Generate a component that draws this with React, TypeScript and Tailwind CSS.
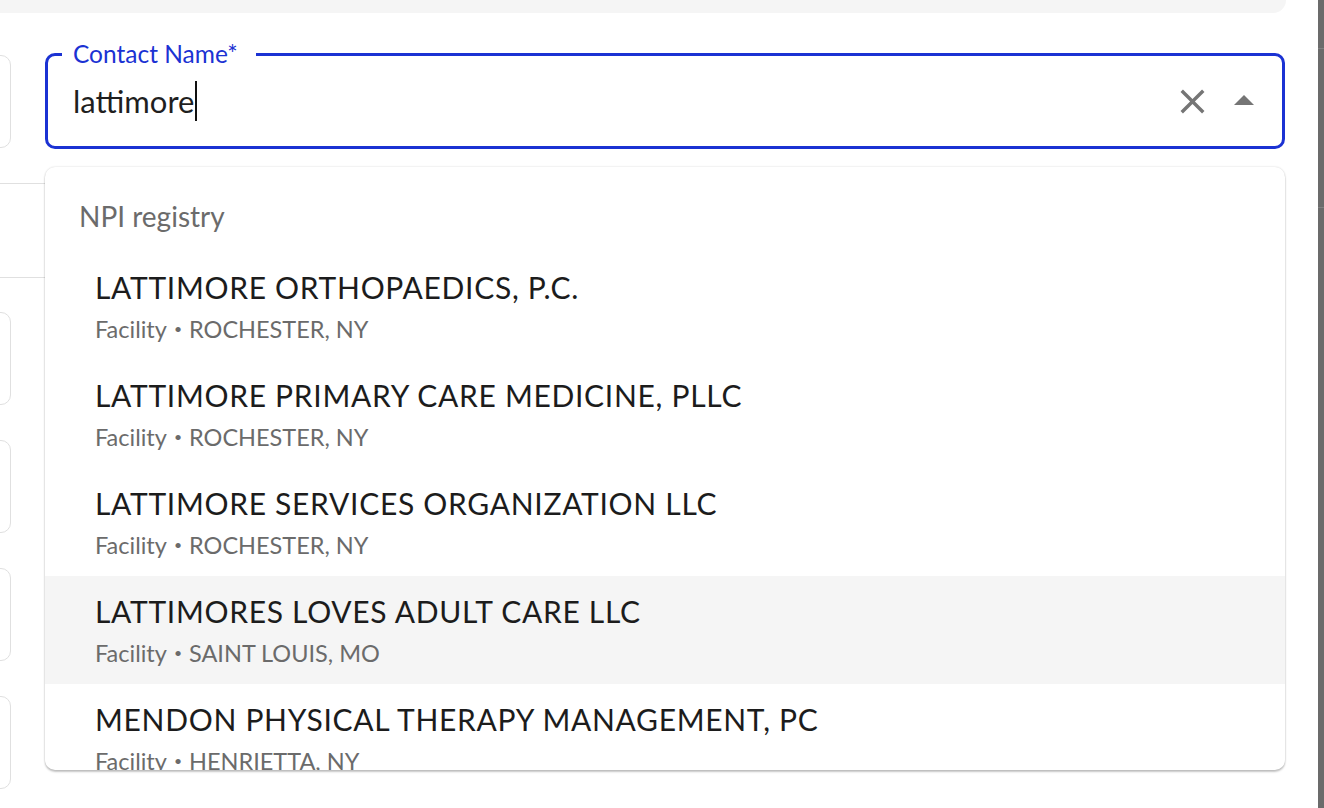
const results = [
  { name: 'LATTIMORE ORTHOPAEDICS, P.C.', place: 'ROCHESTER, NY' },
  { name: 'LATTIMORE PRIMARY CARE MEDICINE, PLLC', place: 'ROCHESTER, NY' },
  { name: 'LATTIMORE SERVICES ORGANIZATION LLC', place: 'ROCHESTER, NY' },
  { name: 'LATTIMORES LOVES ADULT CARE LLC', place: 'SAINT LOUIS, MO', active: true },
  { name: 'MENDON PHYSICAL THERAPY MANAGEMENT, PC', place: 'HENRIETTA, NY' },
]

function SideBox({ top }: { top: string }) {
  return <div className={`${top} -ml-[20px] h-[93px] w-[31px] rounded-[10px] border border-[#e0e0e0]`} />
}

export default function App() {
  return (
    <div className="flex h-[808px] w-[1324px] overflow-hidden bg-white [font-family:Lato,sans-serif]">
      <div className="flex flex-1 flex-col">
        <div className="h-[13px] w-[1286px] rounded-br-[14px] bg-[#f5f5f5]" />
        <div className="flex">
          <div className="flex w-[45px] flex-none flex-col">
            <SideBox top="mt-[42px]" />
            <div className="mt-[35px] h-[95px] border-y border-[#e0e0e0]" />
            <SideBox top="mt-[34px]" />
            <SideBox top="mt-[35px]" />
            <SideBox top="mt-[35px]" />
            <SideBox top="mt-[35px]" />
          </div>

          <div className="w-[1240px] flex-none">
            <div className="relative mt-[40px] flex h-[96px] items-center rounded-[10px] border-[3px] border-[#1b32d3] pl-[25px] pr-[14px]">
              <span className="absolute -top-[16px] left-[14px] bg-white pl-[11px] pr-[18px] text-[24.5px] leading-[28px] text-[#1b32d3]">
                Contact Name*
              </span>
              <div className="flex flex-1 items-center text-[31px] text-[#1f1f1f]">
                lattimore
                <span className="ml-[1px] h-[40px] w-[2px] bg-[#111]" />
              </div>
              <svg viewBox="0 0 24 24" className="h-[41px] w-[41px] fill-[#757575]">
                <path d="M19 6.41 17.59 5 12 10.59 6.41 5 5 6.41 10.59 12 5 17.59 6.41 19 12 13.41 17.59 19 19 17.59 13.41 12z" />
              </svg>
              <svg viewBox="0 0 24 24" className="ml-[7px] h-[48px] w-[48px] fill-[#757575]">
                <path d="M7 14l5-5 5 5z" />
              </svg>
            </div>

            <div className="mt-[18px] h-[603px] overflow-hidden rounded-[10px] bg-white shadow-[0_2px_2px_rgba(0,0,0,0.22),0_0_2px_rgba(0,0,0,0.18)]">
              <div className="flex h-[85px] items-end pb-[18px] pl-[34px] text-[28px] leading-[36px] text-[#6b6b6b]">
                NPI registry
              </div>
              {results.map((r) => (
                <div
                  key={r.name}
                  className={`flex h-[108px] flex-col pl-[50px] pt-[16px] ${r.active ? 'bg-[#f5f5f5]' : ''}`}
                >
                  <div className="text-[30px] leading-[38px] tracking-[0.7px] text-[#1c1c1c]">{r.name}</div>
                  <div className="mt-[8px] flex items-center text-[23.5px] leading-[30px] text-[#6b6b6b]">
                    Facility
                    <span className="mx-[7px] text-[14px] leading-none">•</span>
                    {r.place}
                  </div>
                </div>
              ))}
            </div>
          </div>
        </div>
      </div>
      <div className="relative w-[6px] flex-none bg-[#6b6b6b]">
        <div className="absolute left-0 top-[48px] h-px w-full bg-[#808080]" />
        <div className="absolute left-0 top-[207px] h-px w-full bg-[#808080]" />
      </div>
    </div>
  )
}
